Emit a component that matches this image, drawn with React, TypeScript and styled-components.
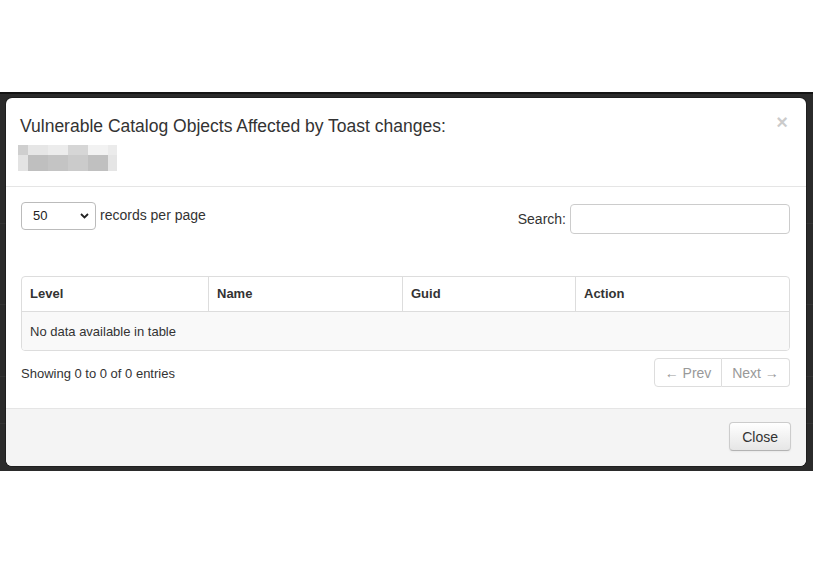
import styled, { createGlobalStyle } from "styled-components";

const GlobalStyle = createGlobalStyle`
  html, body {
    margin: 0;
    padding: 0;
    background: #fff;
    font-family: "Liberation Sans", Arial, sans-serif;
    color: #333;
  }
  * {
    box-sizing: border-box;
  }
`;

const Page = styled.div`
  width: 813px;
  height: 564px;
  padding-top: 92px;
  background: #fff;
`;

// dimmed page behind the dialog; the faint rules are the page's own rows showing through
const Backdrop = styled.div`
  border-top: 2px solid #141414;
  padding: 4px 7px 5px 6px;
  background-color: #2b2b2b;
  background-image:
    linear-gradient(#343434, #343434),
    linear-gradient(#343434, #343434),
    linear-gradient(#343434, #343434),
    linear-gradient(#343434, #343434);
  background-size: 100% 1px;
  background-repeat: no-repeat;
  background-position: 0 129px, 0 210px, 0 282px, 0 329px;
`;

const Modal = styled.div`
  width: 800px;
  background: #fff;
  border-radius: 6px;
  overflow: hidden;
  box-shadow: 0 0 0 1px rgba(0, 0, 0, 0.3);
`;

const Header = styled.div`
  display: flex;
  align-items: flex-start;
  justify-content: space-between;
  padding: 18px 16px 15px 14px;
  border-bottom: 1px solid #e5e5e5;
`;

const TitleBlock = styled.div`
  display: flex;
  flex-direction: column;
  gap: 9px;
`;

const Title = styled.h3`
  margin: 0;
  font-size: 17.5px;
  font-weight: 400;
  line-height: 20px;
  color: #333;
`;

const Redacted = styled.div`
  display: grid;
  grid-template-columns: 10px 20px 20px 20px 20px 9px;
  grid-template-rows: 10px 16px;
  margin-left: -2px;
`;

const Pixel = styled.span<{ $shade: string }>`
  background: ${({ $shade }) => $shade};
`;

const CloseX = styled.button`
  border: 0;
  background: none;
  padding: 0;
  margin-top: -4px;
  margin-right: 2px;
  font-family: "Liberation Sans", Arial, sans-serif;
  font-size: 20px;
  font-weight: 700;
  line-height: 20px;
  color: #000;
  opacity: 0.2;
  cursor: pointer;
`;

const Body = styled.div`
  padding: 15px 16px 21px 15px;
`;

const Toolbar = styled.div`
  display: flex;
  justify-content: space-between;
  align-items: flex-start;
`;

const LengthControl = styled.label`
  display: flex;
  align-items: flex-start;
  gap: 4px;
  font-size: 14px;
  line-height: 20px;
`;

const LengthText = styled.span`
  margin-top: 3px;
`;

const SelectBox = styled.div`
  width: 75px;
  height: 28px;
  display: flex;
  align-items: center;
  justify-content: space-between;
  padding: 0 6px 0 11px;
  border: 1px solid #bbb;
  border-radius: 4px;
  background: #fff;
  font-size: 13px;
  color: #222;
`;

const SearchControl = styled.label`
  display: flex;
  align-items: center;
  gap: 4px;
  font-size: 14px;
  margin-top: 2px;
`;

const SearchInput = styled.input`
  width: 220px;
  height: 30px;
  border: 1px solid #ccc;
  border-radius: 4px;
  padding: 4px 8px;
  font-size: 14px;
  outline: none;
`;

const Table = styled.table`
  width: 100%;
  margin-top: 42px;
  border-collapse: separate;
  border-spacing: 0;
  border: 1px solid #ddd;
  border-radius: 4px;
  overflow: hidden;
  font-size: 13px;
  line-height: 18px;
`;

const HeadCell = styled.th<{ $width?: number }>`
  width: ${({ $width }) => ($width ? `${$width}px` : "auto")};
  text-align: left;
  font-weight: 700;
  padding: 8px;
  border-bottom: 1px solid #ddd;
  border-left: 1px solid #ddd;
  color: #333;

  &:first-child {
    border-left: 0;
  }
`;

const EmptyCell = styled.td`
  padding: 11px 8px 9px;
  background: #f9f9f9;
  color: #333;
`;

const Footer = styled.div`
  display: flex;
  justify-content: space-between;
  align-items: center;
  margin-top: 7px;
`;

const Info = styled.div`
  font-size: 13px;
  margin-top: 2px;
`;

const Pager = styled.div`
  display: flex;
`;

const PageButton = styled.span`
  width: 68px;
  height: 29px;
  display: flex;
  align-items: center;
  justify-content: center;
  border: 1px solid #ddd;
  font-size: 14px;
  color: #999;
  background: #fff;

  &:first-child {
    border-radius: 4px 0 0 4px;
  }
  &:last-child {
    border-left: 0;
    border-radius: 0 4px 4px 0;
  }
`;

const ModalFooter = styled.div`
  display: flex;
  justify-content: flex-end;
  padding: 13px 15px 15px;
  border-top: 1px solid #e5e5e5;
  background: #f4f4f4;
`;

const Button = styled.button`
  height: 29px;
  padding: 0 12px;
  border: 1px solid #ccc;
  border-bottom-color: #b3b3b3;
  border-radius: 4px;
  background: linear-gradient(#ffffff, #e6e6e6);
  box-shadow: inset 0 1px 0 rgba(255, 255, 255, 0.2), 0 1px 2px rgba(0, 0, 0, 0.05);
  font-family: "Liberation Sans", Arial, sans-serif;
  font-size: 14px;
  color: #333;
  cursor: pointer;
`;

const redactedShades = [
  "#cfcfcf", "#e6e6e6", "#ececec", "#d6d6d6", "#f2f2f2", "#ebebeb",
  "#e3e3e3", "#bfbfbf", "#c4c4c4", "#cbcbcb", "#c0c0c0", "#e5e5e5",
];

const columns = [
  { label: "Level", width: 186 },
  { label: "Name", width: 194 },
  { label: "Guid", width: 173 },
  { label: "Action" },
];

const Chevron = () => (
  <svg width="9" height="6" viewBox="0 0 9 6">
    <path d="M1 1l3.5 3.5L8 1" fill="none" stroke="#222" strokeWidth="1.8" />
  </svg>
);

export default function App() {
  return (
    <Page>
      <GlobalStyle />
      <Backdrop>
        <Modal>
          <Header>
            <TitleBlock>
              <Title>Vulnerable Catalog Objects Affected by Toast changes:</Title>
              <Redacted>
                {redactedShades.map((shade, i) => (
                  <Pixel key={i} $shade={shade} />
                ))}
              </Redacted>
            </TitleBlock>
            <CloseX aria-label="Close">×</CloseX>
          </Header>
          <Body>
            <Toolbar>
              <LengthControl>
                <SelectBox>
                  <span>50</span>
                  <Chevron />
                </SelectBox>
                <LengthText>records per page</LengthText>
              </LengthControl>
              <SearchControl>
                Search:
                <SearchInput type="text" />
              </SearchControl>
            </Toolbar>
            <Table>
              <thead>
                <tr>
                  {columns.map((col) => (
                    <HeadCell key={col.label} $width={col.width}>
                      {col.label}
                    </HeadCell>
                  ))}
                </tr>
              </thead>
              <tbody>
                <tr>
                  <EmptyCell colSpan={4}>No data available in table</EmptyCell>
                </tr>
              </tbody>
            </Table>
            <Footer>
              <Info>Showing 0 to 0 of 0 entries</Info>
              <Pager>
                <PageButton>← Prev</PageButton>
                <PageButton>Next →</PageButton>
              </Pager>
            </Footer>
          </Body>
          <ModalFooter>
            <Button>Close</Button>
          </ModalFooter>
        </Modal>
      </Backdrop>
    </Page>
  );
}
